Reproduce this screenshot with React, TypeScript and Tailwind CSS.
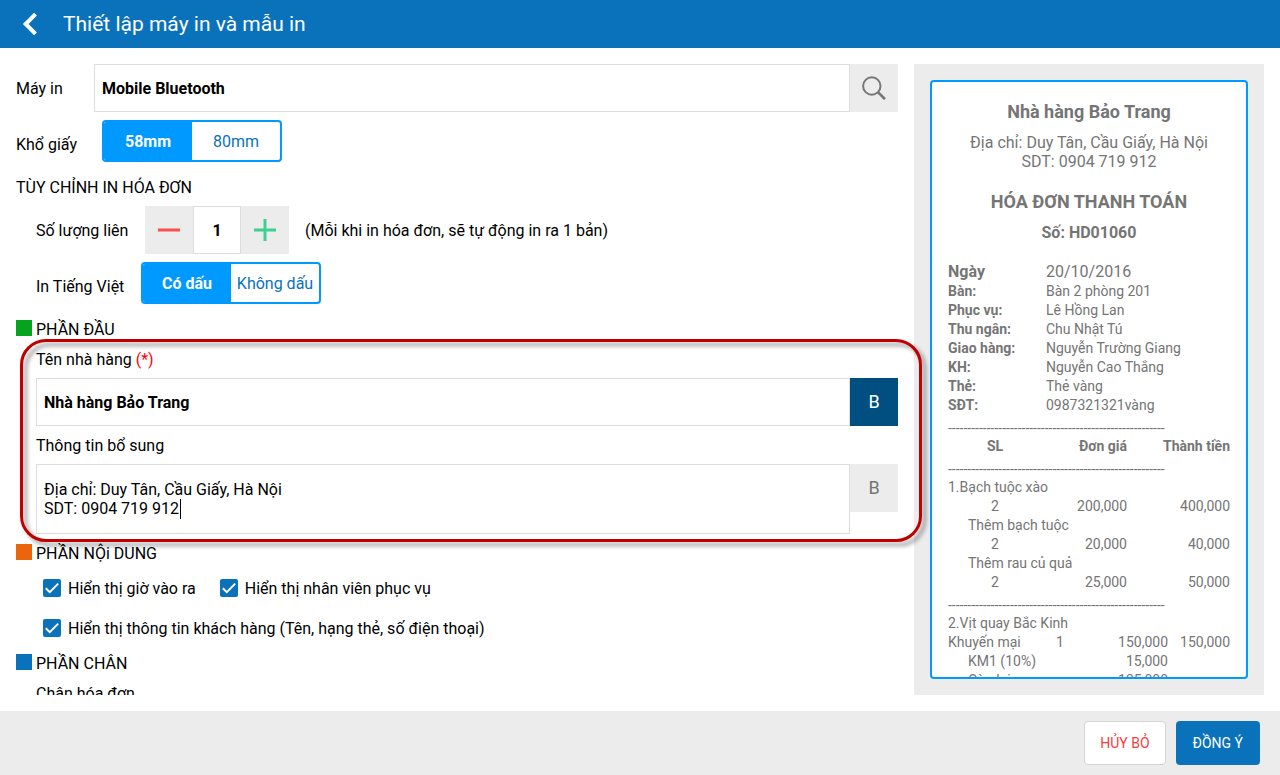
import type { ReactNode } from "react";

const RULE = "-".repeat(56);

const INVOICE_INFO = [
  ["Bàn:", "Bàn 2 phòng 201"],
  ["Phục vụ:", "Lê Hồng Lan"],
  ["Thu ngân:", "Chu Nhật Tú"],
  ["Giao hàng:", "Nguyễn Trường Giang"],
  ["KH:", "Nguyễn Cao Thắng"],
  ["Thẻ:", "Thẻ vàng"],
  ["SĐT:", "0987321321vàng"],
];

const ITEMS = [
  { name: "1.Bạch tuộc xào", qty: 2, price: "200,000", total: "400,000" },
  { name: "Thêm bạch tuộc", qty: 2, price: "20,000", total: "40,000", extra: true },
  { name: "Thêm rau củ quả", qty: 2, price: "25,000", total: "50,000", extra: true },
];

function Toggle({ name, label, options }: { name: string; label: string; options: string[] }) {
  return (
    <div
      role="radiogroup"
      aria-label={label}
      className="grid h-[42px] w-[180px] grid-cols-2 self-start overflow-hidden rounded border-2 border-[#0099ff] bg-white"
    >
      {options.map((option, i) => (
        <label
          key={option}
          className="flex cursor-pointer items-center justify-center whitespace-nowrap text-[#0972ba] has-checked:bg-[#0099ff] has-checked:font-bold has-checked:text-white"
        >
          <input type="radio" name={name} defaultChecked={i === 0} className="sr-only" />
          {option}
        </label>
      ))}
    </div>
  );
}

function SectionTitle({ color, children }: { color: string; children: ReactNode }) {
  return (
    <h2 className="flex h-[38px] items-center gap-1">
      <span className={`mb-0.5 size-4 ${color}`} />
      {children}
    </h2>
  );
}

function CheckItem({ children }: { children: ReactNode }) {
  return (
    <label className="flex h-8 items-center gap-[7px]">
      <span className="relative size-[18px]">
        <input
          type="checkbox"
          defaultChecked
          className="peer block size-[18px] appearance-none rounded-xs border-2 border-[#0972ba] checked:bg-[#0972ba]"
        />
        <svg
          viewBox="0 0 18 18"
          className="pointer-events-none absolute inset-0 hidden peer-checked:block"
          fill="none"
          stroke="white"
          strokeWidth="2"
          aria-hidden="true"
        >
          <path d="M2.8 9.2l4 4 8.4-8.6" />
        </svg>
      </span>
      {children}
    </label>
  );
}

function Receipt() {
  return (
    <div className="h-full overflow-hidden rounded border-2 border-[#0099ff] bg-white px-4 pt-5 text-sm leading-[19px] text-[#757575]">
      <div className="text-center">
        <p className="text-lg leading-5 font-bold">Nhà hàng Bảo Trang</p>
        <p className="mt-[11px] text-base leading-[19px]">
          Địa chỉ: Duy Tân, Cầu Giấy, Hà Nội
          <br />
          SDT: 0904 719 912
        </p>
        <p className="mt-[21px] text-lg leading-5 font-bold">HÓA ĐƠN THANH TOÁN</p>
        <p className="mt-[11px] text-base leading-5 font-bold">Số: HD01060</p>
      </div>

      <dl className="mt-[18px] grid grid-cols-[98px_1fr]">
        <dt className="text-base leading-[21px] font-bold">Ngày</dt>
        <dd className="text-base leading-[21px]">20/10/2016</dd>
        {INVOICE_INFO.map(([key, value]) => (
          <div key={key} className="contents">
            <dt className="font-bold">{key}</dt>
            <dd>{value}</dd>
          </div>
        ))}
      </dl>

      <table className="w-full table-fixed">
        <colgroup>
          <col className="w-[94px]" />
          <col className="w-[85px]" />
          <col />
        </colgroup>
        <thead>
          <tr>
            <td colSpan={3} className="pt-1 leading-[18px]">{RULE}</td>
          </tr>
          <tr>
            <th className="text-center">SL</th>
            <th className="text-right">Đơn giá</th>
            <th className="text-right">Thành tiền</th>
          </tr>
          <tr>
            <td colSpan={3} className="pt-1 leading-[18px]">{RULE}</td>
          </tr>
        </thead>
        {ITEMS.map((item) => (
          <tbody key={item.name}>
            <tr>
              <td colSpan={3} className={item.extra ? "pl-5" : ""}>{item.name}</td>
            </tr>
            <tr>
              <td className="text-center">{item.qty}</td>
              <td className="text-right">{item.price}</td>
              <td className="text-right">{item.total}</td>
            </tr>
          </tbody>
        ))}
      </table>

      <table className="w-full table-fixed">
        <colgroup>
          <col className="w-[94px]" />
          <col className="w-9" />
          <col className="w-[90px]" />
          <col />
        </colgroup>
        <tbody>
          <tr>
            <td colSpan={4} className="pt-1 leading-[18px]">{RULE}</td>
          </tr>
          <tr>
            <td colSpan={4}>2.Vịt quay Bắc Kinh</td>
          </tr>
          <tr>
            <td>Khuyến mại</td>
            <td className="text-center">1</td>
            <td className="text-right">150,000</td>
            <td className="text-right">150,000</td>
          </tr>
          <tr>
            <td colSpan={2} className="pl-5">KM1 (10%)</td>
            <td className="text-right">15,000</td>
            <td />
          </tr>
          <tr>
            <td colSpan={2} className="pl-5">Còn lại</td>
            <td className="text-right">135,000</td>
            <td />
          </tr>
        </tbody>
      </table>
    </div>
  );
}

export default function App() {
  return (
    <div className="flex h-screen flex-col bg-white font-['Roboto',sans-serif] text-base leading-[19px] text-black">
      <header className="flex h-12 shrink-0 items-center bg-[#0972ba] text-white">
        <button type="button" aria-label="Quay lại" className="flex h-12 w-[63px] items-center pl-[22px]">
          <svg width="16" height="24" viewBox="0 0 16 24" fill="none" stroke="currentColor" strokeWidth="4" aria-hidden="true">
            <path d="M13.5 2.2L3.7 12l9.8 9.8" />
          </svg>
        </button>
        <h1 className="text-[21px] leading-7">Thiết lập máy in và mẫu in</h1>
      </header>

      <main className="flex min-h-0 flex-1 gap-4 p-4">
        {/* Settings form: cut off vertically, the highlight may run past its right edge */}
        <div className="relative z-10 min-w-0 flex-1 overflow-y-clip">
          <div className="flex h-12 items-center">
            <label htmlFor="printer" className="w-[78px]">Máy in</label>
            <input
              id="printer"
              defaultValue="Mobile Bluetooth"
              className="h-12 min-w-0 flex-1 border border-[#dddddd] px-[7px] font-bold"
            />
            <button type="button" aria-label="Tìm máy in" className="flex size-12 items-center justify-center bg-[#ececec]">
              <svg width="24" height="24" viewBox="0 0 24 24" fill="none" stroke="#777777" strokeWidth="2" aria-hidden="true">
                <circle cx="9.8" cy="10" r="8.7" />
                <path d="M15.8 16l7.2 7.2" strokeWidth="2.6" />
              </svg>
            </button>
          </div>

          <div className="mt-2 flex h-12 items-center">
            <span className="w-[86px]">Khổ giấy</span>
            <Toggle name="paper" label="Khổ giấy" options={["58mm", "80mm"]} />
          </div>

          <h2 className="flex h-[38px] items-center">TÙY CHỈNH IN HÓA ĐƠN</h2>

          <div className="flex h-12 items-center pl-5">
            <label htmlFor="copies" className="w-[109px]">Số lượng liên</label>
            <div className="flex">
              <button type="button" aria-label="Giảm" className="flex size-12 items-center justify-center bg-[#ececec]">
                <svg width="24" height="24" viewBox="0 0 24 24" stroke="#fb4f4b" strokeWidth="3" aria-hidden="true">
                  <path d="M1 12h22" />
                </svg>
              </button>
              <input
                id="copies"
                defaultValue="1"
                className="size-12 border border-[#dddddd] text-center font-bold"
              />
              <button type="button" aria-label="Tăng" className="flex size-12 items-center justify-center bg-[#ececec]">
                <svg width="24" height="24" viewBox="0 0 24 24" stroke="#3fcf8e" strokeWidth="3" aria-hidden="true">
                  <path d="M1 12h22M12 1v22" />
                </svg>
              </button>
            </div>
            <span className="ml-4">(Mỗi khi in hóa đơn, sẽ tự động in ra 1 bản)</span>
          </div>

          <div className="mt-2 flex h-12 items-center pl-5">
            <span className="w-[105px]">In Tiếng Việt</span>
            <Toggle name="accent" label="In Tiếng Việt" options={["Có dấu", "Không dấu"]} />
          </div>

          <SectionTitle color="bg-[#06a41e]">PHẦN ĐẦU</SectionTitle>

          <div className="relative ml-5">
            <label htmlFor="restaurant" className="block leading-6">
              Tên nhà hàng <span className="text-[#ff0000]">(*)</span>
            </label>
            <div className="mt-1.5 flex">
              <input
                id="restaurant"
                defaultValue="Nhà hàng Bảo Trang"
                className="h-12 min-w-0 flex-1 border border-[#dddddd] px-[7px] font-bold"
              />
              <button type="button" className="size-12 bg-[#004f80] text-lg text-white">B</button>
            </div>

            <label htmlFor="extra-info" className="mt-2 block leading-6">Thông tin bổ sung</label>
            <div className="relative mt-1.5 flex items-start">
              <textarea
                id="extra-info"
                defaultValue={"Địa chỉ: Duy Tân, Cầu Giấy, Hà Nội\nSDT: 0904 719 912"}
                className="h-[70px] min-w-0 flex-1 resize-none border border-[#dddddd] px-[7px] pt-[15px] leading-[19px]"
              />
              <span className="absolute top-[35px] left-36 h-5 w-px bg-black" />
              <button type="button" className="size-12 bg-[#ececec] text-lg text-[#757575]">B</button>
            </div>

            {/* Highlight around the header fields */}
            <div className="pointer-events-none absolute -top-[9px] -right-6 -bottom-2 -left-4 rounded-[26px] border-3 border-[#c00000] drop-shadow-[4px_4px_2px_rgba(0,0,0,0.4)]" />
          </div>

          <SectionTitle color="bg-[#ec640b]">PHẦN NỘi DUNG</SectionTitle>
          <div className="flex flex-wrap gap-x-6 gap-y-2 pl-[27px]">
            <CheckItem>Hiển thị giờ vào ra</CheckItem>
            <CheckItem>Hiển thị nhân viên phục vụ</CheckItem>
            <div className="basis-full">
              <CheckItem>Hiển thị thông tin khách hàng (Tên, hạng thẻ, số điện thoại)</CheckItem>
            </div>
          </div>

          <SectionTitle color="bg-[#0972ba]">PHẦN CHÂN</SectionTitle>
          <p className="pl-5 leading-6">Chân hóa đơn</p>
        </div>

        <aside className="w-[350px] shrink-0 bg-[#ececec] p-4">
          <Receipt />
        </aside>
      </main>

      <footer className="flex h-16 shrink-0 items-center justify-end gap-2.5 bg-[#ececec] px-5 text-sm">
        <button type="button" className="h-11 rounded border border-[#d5d5d5] bg-white px-[15px] text-[#fb3b3b]">
          HỦY BỎ
        </button>
        <button type="button" className="h-11 rounded bg-[#0972ba] px-[17px] text-white">ĐỒNG Ý</button>
      </footer>
    </div>
  );
}
